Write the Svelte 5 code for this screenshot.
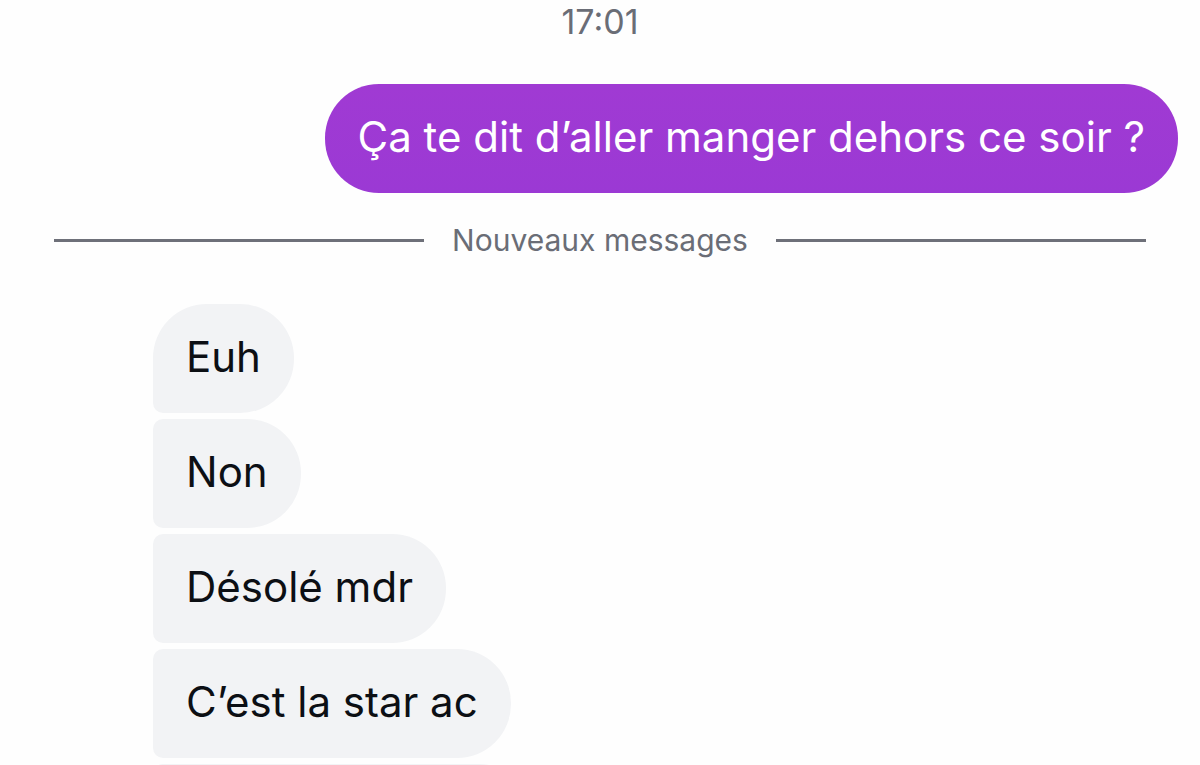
<script>
  // Conversation data
  const time = '17:01';
  const sent = ['Ça te dit d’aller manger dehors ce soir ?'];

  // The last message is still empty
  const received = ['Euh', 'Non', 'Désolé mdr', 'C’est la star ac', ''];
</script>

<main class="chat">
  <time class="timestamp">{time}</time>

  <div class="messages sent">
    {#each sent as message}
      <p class="bubble">{message}</p>
    {/each}
  </div>

  <div class="divider">
    <span>Nouveaux messages</span>
  </div>

  <div class="messages received">
    {#each received as message}
      <p class="bubble" class:pending={!message}>{message}</p>
    {/each}
  </div>
</main>

<style>
  :global(body) {
    margin: 0;
    background: #fefefe;
  }

  .chat {
    display: flex;
    flex-direction: column;
    box-sizing: border-box;
    height: 100vh;
    overflow: hidden;
    font-family: Inter, 'Liberation Sans', sans-serif;
  }

  .timestamp {
    flex: none;
    padding-top: 2px;
    font-size: 34px;
    line-height: 40px;
    text-align: center;
    color: #6a6d76;
  }

  .messages {
    display: flex;
    flex: none;
    flex-direction: column;
    gap: 6px;
  }

  .bubble {
    box-sizing: border-box;
    min-height: 109px;
    margin: 0;
    padding: 26px 33px 30px;
    border-radius: 54px;
    font-size: 42px;
    line-height: 53px;
  }

  .sent {
    align-items: flex-end;
    padding: 42px 22px 0;
  }

  .sent .bubble {
    background: linear-gradient(#a03ad3, #9b39d4);
    color: #fff;
  }

  .divider {
    display: flex;
    flex: none;
    align-items: center;
    gap: 28px;
    padding: 27px 54px 0;
    font-size: 30px;
    line-height: 40px;
    color: #6a6d76;
  }

  .divider::before,
  .divider::after {
    content: '';
    flex: 1;
    height: 3px;
    background: #6e7079;
  }

  .received {
    align-items: flex-start;
    padding: 44px 22px 0 153px;
  }

  .received .bubble {
    border-radius: 10px 54px 54px 10px;
    background: #f2f3f5;
    color: #0c0f14;
  }

  .received .bubble:first-child {
    border-top-left-radius: 54px;
  }

  .received .pending {
    width: 380px;
  }
</style>
